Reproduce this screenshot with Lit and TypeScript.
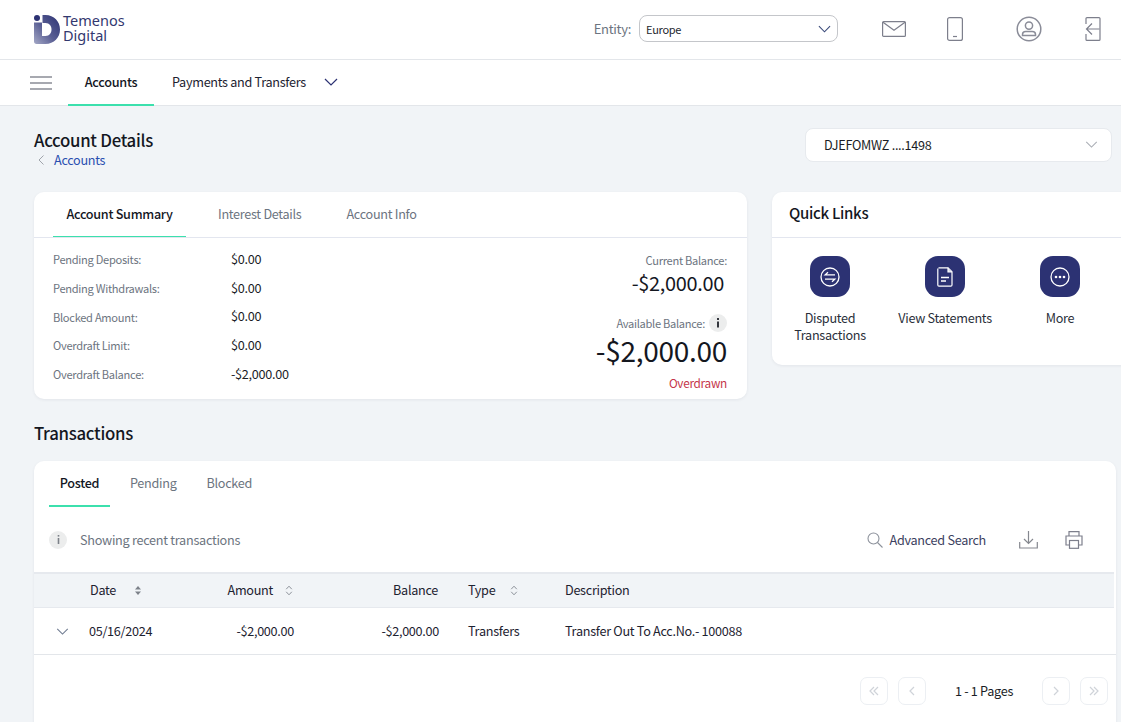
import { LitElement, html, css, svg } from "lit";
import { customElement } from "lit/decorators.js";

const chevron = (w: number, h: number, color: string) => html`<svg width=${w} height=${h} viewBox="0 0 14 8" fill="none" stroke=${color} stroke-width="1.2"><path d="M1 1l6 6 6-6"/></svg>`;

const sort = (filled: boolean) => html`<svg class="sort" width="8" height="11" viewBox="0 0 8 11">
  ${filled
    ? svg`<path d="M4 1l3 3.4H1z" fill="#7c8189"/><path d="M4 10L1 6.6h6z" fill="#7c8189"/>`
    : svg`<path d="M1.2 4.2L4 1.2l2.8 3M1.2 6.8L4 9.8l2.8-3" fill="none" stroke="#8d929a" stroke-width="1"/>`}
</svg>`;

const rows = [
  ["Pending Deposits:", "$0.00"],
  ["Pending Withdrawals:", "$0.00"],
  ["Blocked Amount:", "$0.00"],
  ["Overdraft Limit:", "$0.00"],
  ["Overdraft Balance:", "-$2,000.00"],
];

@customElement("app-root")
export class AppRoot extends LitElement {
  static styles = css`
    :host {
      display: block;
      width: 1121px;
      height: 722px;
      overflow: hidden;
      background: #f1f4f7;
      font-family: "Noto Sans CJK SC", "Noto Sans", sans-serif;
      color: #14171f;
      font-size: 12.65px;
      letter-spacing: -0.023em;
    }
    svg { display: block; flex: none; }
    .header {
      height: 59px;
      background: #fff;
      border-bottom: 1px solid #e3e6ea;
      display: flex;
      align-items: center;
      padding-left: 33px;
    }
    .logo { display: flex; align-items: center; gap: 2px; }
    .logo-text {
      font-family: "Noto Sans", sans-serif;
      font-size: 14.5px;
      line-height: 15.5px;
      letter-spacing: 0;
      color: #33386f;
      margin-top: -3px;
    }
    .entity { margin: -2px 0 0 auto; display: flex; align-items: center; }
    .entity-label { color: #6c7480; font-size: 13px; margin-right: 8px; }
    .select {
      width: 199px;
      height: 27px;
      box-sizing: border-box;
      border: 1px solid #c4c6ca;
      border-radius: 8px;
      display: flex;
      align-items: center;
      justify-content: space-between;
      padding: 0 6px;
      font-size: 11px;
      color: #24272e;
    }
    .hicons { display: flex; align-items: center; margin: -1px 20px 0 0; }
    .hicons svg:nth-child(1) { margin-left: 44px; }
    .hicons svg:nth-child(2) { margin-left: 41px; }
    .hicons svg:nth-child(3) { margin-left: 53px; }
    .hicons svg:nth-child(4) { margin-left: 43px; }
    .nav {
      height: 45px;
      background: #fff;
      border-bottom: 1px solid #e3e6ea;
      display: flex;
      align-items: stretch;
    }
    .burger { margin: 16px 16px 0 30px; }
    .navtab {
      width: 86px;
      box-sizing: border-box;
      border-bottom: 2px solid #3ce0ad;
      margin-bottom: -1px;
      text-align: center;
      line-height: 43px;
      font-size: 12.7px;
      font-weight: 500;
      color: #14171f;
    }
    .navlink { margin-left: 18px; line-height: 43px; color: #1d2230; }
    .navchev { margin: 18px 0 0 18px; }
    .main { padding: 0 0 0 34px; }
    .titlebar { display: flex; justify-content: space-between; padding: 22px 9px 0 0; height: 64px; }
    h1 { margin: 0; font-size: 16.8px; font-weight: 500; line-height: 24px; }
    .crumb { display: flex; align-items: center; gap: 10px; margin-top: -1px; padding-left: 4px; color: #2a4fb0; line-height: 18px; }
    .acct {
      width: 307px;
      height: 34px;
      box-sizing: border-box;
      background: #fff;
      border: 1px solid #e7eaee;
      border-radius: 8px;
      display: flex;
      align-items: center;
      justify-content: space-between;
      padding: 0 13px 2px 18px;
      color: #1a1d26;
    }
    .cards { display: flex; gap: 25px; width: 1120px; }
    .card { background: #fff; border-radius: 10px; box-shadow: 0 1px 3px rgba(60,70,90,0.08); }
    .summary { width: 713px; height: 207px; }
    .tabs { display: flex; box-sizing: border-box; border-bottom: 1px solid #e3e6ef; height: 46px; padding-left: 19px; }
    .tab { color: #6c7480; line-height: 43px; margin-left: 45px; }
    .tab.on {
      color: #14171f;
      font-weight: 500;
      margin-left: 0;
      width: 133px;
      text-align: center;
      border-bottom: 1px solid #3ce0ad;
      box-sizing: border-box;
      height: 45px;
    }
    .tab.on + .tab { margin-left: 32px; }
    .summary-body { display: flex; justify-content: space-between; padding: 7px 20px 0 19px; }
    .rows { display: flex; flex-direction: column; }
    .row { display: flex; height: 28.7px; align-items: center; }
    .row .k { width: 178px; font-size: 11.1px; color: #6c7480; }
    .row .v { color: #1a1d26; margin-bottom: 2px; }
    .bal { display: flex; flex-direction: column; align-items: flex-end; padding-top: 7px; }
    .bal-label { font-size: 11.1px; line-height: 16px; color: #6c7480; display: flex; align-items: center; gap: 4px; }
    .bal-cur { font-size: 19.9px; line-height: 30px; margin-right: 3px; color: #14171f; }
    .bal-avail { margin-top: 16px; line-height: 18px; }
    .bal-big { font-size: 28px; line-height: 36px; color: #14171f; }
    .over { font-size: 11.8px; line-height: 18px; color: #c5364a; margin-top: 6px; }
    .ibadge { width: 18px; height: 18px; border-radius: 50%; background: #eceded; display: flex; align-items: center; justify-content: center; }
    .quick { width: 360px; height: 173px; border-radius: 10px 0 0 10px; }
    .quick-head { height: 45px; border-bottom: 1px solid #e3e6ef; padding-left: 17px; line-height: 41px; font-size: 15px; font-weight: 500; }
    .links { display: grid; grid-template-columns: repeat(3, 115px); padding-top: 18px; }
    .link { display: flex; flex-direction: column; align-items: center; text-align: center; line-height: 17px; color: #2a2f3a; }
    .link span { padding-left: 1px; }
    .tile { width: 40px; height: 41px; border-radius: 13px; background: #2c3273; display: flex; align-items: center; justify-content: center; margin-bottom: 12px; }
    h2 { margin: 0; font-size: 16.8px; font-weight: 500; line-height: 24px; padding: 22px 0 16px; }
    .tx { width: 1082px; height: 300px; border-radius: 10px 10px 0 0; }
    .tx-tabs { display: flex; height: 46px; padding-left: 15px; }
    .tx-tab { color: #6c7480; line-height: 44px; margin-left: 30px; }
    .tx-tab.on {
      color: #14171f;
      font-weight: 500;
      margin-left: 0;
      width: 61px;
      text-align: center;
      border-bottom: 2px solid #3ce0ad;
      height: 44px;
    }
    .tx-tab.on + .tx-tab { margin-left: 20px; }
    .tools { display: flex; align-items: center; height: 65px; padding: 0 33px 0 15px; }
    .itext { margin-left: 13px; color: #6c7480; font-size: 12.7px; }
    .search { margin-left: auto; display: flex; align-items: center; gap: 7px; color: #3c4160; }
    .tools .dl { margin-left: 33px; }
    .tools .pr { margin-left: 27px; }
    .grid {
      display: grid;
      grid-template-columns: 55px 120px 85px 145px 29px 97px 1fr;
      align-items: center;
      width: 1080px;
      box-sizing: border-box;
    }
    .thead { height: 36px; background: #f1f4f7; border-top: 2px solid #e6e9ee; border-bottom: 1px solid #e6e9ee; color: #1d2230; }
    .thead > .cell { margin-top: -2px; }
    .tbody { height: 47px; width: 1082px; border-bottom: 1px solid #e3e6ea; color: #1d2230; }
    .tbody > div:not(.chev) { margin-top: -2px; }
    .cell { display: flex; align-items: center; }
    .end { justify-content: flex-end; }
    .sort { margin-top: 1px; }
    .thead .date { padding-left: 1px; gap: 18px; }
    .thead .amt { gap: 12px; padding-right: 1px; }
    .thead .bl { padding-right: 1px; }
    .thead .ty { gap: 15px; }
    .chev { padding-left: 22px; }
    .pager { display: flex; align-items: center; padding: 22px 0 0 826px; }
    .pg { width: 28px; height: 28px; box-sizing: border-box; border: 1px solid #eceff3; border-radius: 7px; display: flex; align-items: center; justify-content: center; }
    .pg + .pg { margin-left: 10px; }
    .pages { width: 116px; text-align: center; color: #1a1d26; margin-top: -2px; }
  `;

  render() {
    const pg = (d: string) => html`<div class="pg"><svg width="12" height="12" viewBox="0 0 12 12" fill="none" stroke="#cfd3d9" stroke-width="1.2"><path d=${d}/></svg></div>`;
    return html`
      <div class="header">
        <div class="logo">
          <svg width="28" height="31" viewBox="0 0 28 31">
            <defs>
              <linearGradient id="lg" x1="0" y1="1" x2="1" y2="0">
                <stop offset="0" stop-color="#a4a8c6"/>
                <stop offset="0.45" stop-color="#5a5f94"/>
                <stop offset="1" stop-color="#2c3273"/>
              </linearGradient>
            </defs>
            <path fill="url(#lg)" d="M9.5 1H12.500C21 1 27 7.500 27 15.500C27 23.500 21 30 12.500 30H3.500C2 30 1 29 1 27.500V8.500H9V22H12.500C16.500 22 18.500 19 18.500 15.500C18.500 12 16.500 9 12.500 9H9.500Z"/>
            <circle cx="4" cy="4" r="3" fill="#2c3273"/>
          </svg>
          <div class="logo-text">Temenos<br />Digital</div>
        </div>
        <div class="entity">
          <span class="entity-label">Entity:</span>
          <div class="select"><span>Europe</span>${chevron(13, 8, "#3a4a7a")}</div>
        </div>
        <div class="hicons">
          <svg width="24" height="16" viewBox="0 0 24 16" fill="none" stroke="#7d7f8c" stroke-width="1.2"><rect x="0.6" y="0.6" width="22.8" height="14.8" rx="1"/><path d="M1 1.2l11 8 11-8"/></svg>
          <svg width="16" height="24" viewBox="0 0 16 24" fill="none" stroke="#7d7f8c" stroke-width="1.2"><rect x="0.6" y="0.6" width="14.8" height="22.8" rx="2"/><path d="M6 19.5h4"/></svg>
          <svg width="26" height="26" viewBox="0 0 26 26" fill="none" stroke="#8a8c98" stroke-width="1.5"><circle cx="13" cy="13" r="11.8"/><circle cx="13" cy="9.6" r="3.6"/><path d="M6.5 19.6v-1.2c0-1.8 1.6-3 3.2-3h6.6c1.6 0 3.2 1.2 3.2 3v1.2z"/></svg>
          <svg width="16" height="24" viewBox="0 0 16 24" fill="none" stroke="#7d7f8c" stroke-width="1.2"><path d="M1 7V1.6C1 1 1.4.6 2 .6h12c.6 0 1 .4 1 1v20.800c0 .6-.4 1-1 1H2c-.6 0-1-.4-1-1V17"/><path d="M14.500 12H1.500M7 6.500L1.500 12 7 17.500"/></svg>
        </div>
      </div>
      <div class="nav">
        <svg class="burger" width="22" height="14" viewBox="0 0 22 14" stroke="#8b8d97" stroke-width="1.4"><path d="M0 1h22M0 7h22M0 13h22"/></svg>
        <div class="navtab">Accounts</div>
        <div class="navlink">Payments and Transfers</div>
        <div class="navchev">${chevron(14, 8, "#2c3273")}</div>
      </div>
      <div class="main">
        <div class="titlebar">
          <div>
            <h1>Account Details</h1>
            <div class="crumb">
              <svg width="6" height="10" viewBox="0 0 6 10" fill="none" stroke="#a0a4ab" stroke-width="1"><path d="M5.500.5L1 5l4.500 4.500"/></svg>
              Accounts
            </div>
          </div>
          <div class="acct">
            <span>DJEFOMWZ ....1498</span>
            ${chevron(13, 7, "#a9adb4")}
          </div>
        </div>
        <div class="cards">
          <div class="card summary">
            <div class="tabs">
              <div class="tab on">Account Summary</div>
              <div class="tab">Interest Details</div>
              <div class="tab">Account Info</div>
            </div>
            <div class="summary-body">
              <div class="rows">
                ${rows.map(([k, v]) => html`<div class="row"><span class="k">${k}</span><span class="v">${v}</span></div>`)}
              </div>
              <div class="bal">
                <div class="bal-label">Current Balance:</div>
                <div class="bal-cur">-$2,000.00</div>
                <div class="bal-label bal-avail">Available Balance:
                  <span class="ibadge"><svg width="4" height="10" viewBox="0 0 4 10" fill="#33363d"><rect x="1" y="0" width="2" height="2"/><rect x="1" y="3.5" width="2" height="6"/></svg></span>
                </div>
                <div class="bal-big">-$2,000.00</div>
                <div class="over">Overdrawn</div>
              </div>
            </div>
          </div>
          <div class="card quick">
            <div class="quick-head">Quick Links</div>
            <div class="links">
              <div class="link">
                <div class="tile"><svg width="20" height="20" viewBox="0 0 20 20" fill="none" stroke="#fff" stroke-width="1.3"><circle cx="10" cy="10" r="9"/><path d="M15 7.800H5.200L8 5.200M5 12.200h9.800L12 14.800"/></svg></div>
                <span>Disputed<br />Transactions</span>
              </div>
              <div class="link">
                <div class="tile"><svg width="16" height="20" viewBox="0 0 16 20" fill="none" stroke="#fff" stroke-width="1.2"><path d="M1.500.8h9.500l4 4V18c0 .7-.5 1.200-1.200 1.200H2C1.300 19.200.8 18.700.8 18V1.500"/><path d="M11 .8v4h4" fill="#d8dae8"/><path d="M4 10.500h8M4 14h5" stroke-width="1.400"/></svg></div>
                <span>View Statements</span>
              </div>
              <div class="link">
                <div class="tile"><svg width="20" height="20" viewBox="0 0 20 20"><circle cx="10" cy="10" r="9" fill="none" stroke="#fff" stroke-width="1.3"/><circle cx="6" cy="10" r="1.300" fill="#fff"/><circle cx="10" cy="10" r="1.300" fill="#fff"/><circle cx="14" cy="10" r="1.300" fill="#fff"/></svg></div>
                <span>More</span>
              </div>
            </div>
          </div>
        </div>
        <h2>Transactions</h2>
        <div class="card tx">
          <div class="tx-tabs">
            <div class="tx-tab on">Posted</div>
            <div class="tx-tab">Pending</div>
            <div class="tx-tab">Blocked</div>
          </div>
          <div class="tools">
            <span class="ibadge"><svg width="3" height="9" viewBox="0 0 3 9" fill="#7c8189"><rect x="0.700" y="0" width="1.600" height="1.600"/><rect x="0.700" y="3" width="1.600" height="6"/></svg></span>
            <span class="itext">Showing recent transactions</span>
            <div class="search">
              <svg width="16" height="16" viewBox="0 0 16 16" fill="none" stroke="#8d929c" stroke-width="1.100"><circle cx="6.500" cy="6.500" r="5.500"/><path d="M10.500 10.500l5 5"/></svg>
              Advanced Search
            </div>
            <svg class="dl" width="19" height="18" viewBox="0 0 19 18" fill="none" stroke="#85888f" stroke-width="1.200"><path d="M9.500 0v12M5 8l4.500 4.500L14 8M.7 11v6h17.600v-6"/></svg>
            <svg class="pr" width="18" height="18" viewBox="0 0 18 18" fill="none" stroke="#7d7f8c" stroke-width="1.200"><path d="M4 5V.7h10V5M4 14H1V5h16v9h-3"/><rect x="4.500" y="9.500" width="9" height="7.800"/></svg>
          </div>
          <div class="grid thead">
            <div></div>
            <div class="cell date">Date ${sort(true)}</div>
            <div class="cell end amt">Amount ${sort(false)}</div>
            <div class="cell end bl">Balance</div>
            <div></div>
            <div class="cell ty">Type ${sort(false)}</div>
            <div class="cell">Description</div>
          </div>
          <div class="grid tbody">
            <div class="chev">${chevron(13, 7, "#6e7a90")}</div>
            <div>05/16/2024</div>
            <div class="cell end">-$2,000.00</div>
            <div class="cell end">-$2,000.00</div>
            <div></div>
            <div>Transfers</div>
            <div>Transfer Out To Acc.No.- 100088</div>
          </div>
          <div class="pager">
            ${pg("M6 2L2 6l4 4M10 2L6 6l4 4")}
            ${pg("M8 2L4 6l4 4")}
            <div class="pages">1 - 1 Pages</div>
            ${pg("M4 2l4 4-4 4")}
            ${pg("M2 2l4 4-4 4M6 2l4 4-4 4")}
          </div>
        </div>
      </div>
    `;
  }
}
